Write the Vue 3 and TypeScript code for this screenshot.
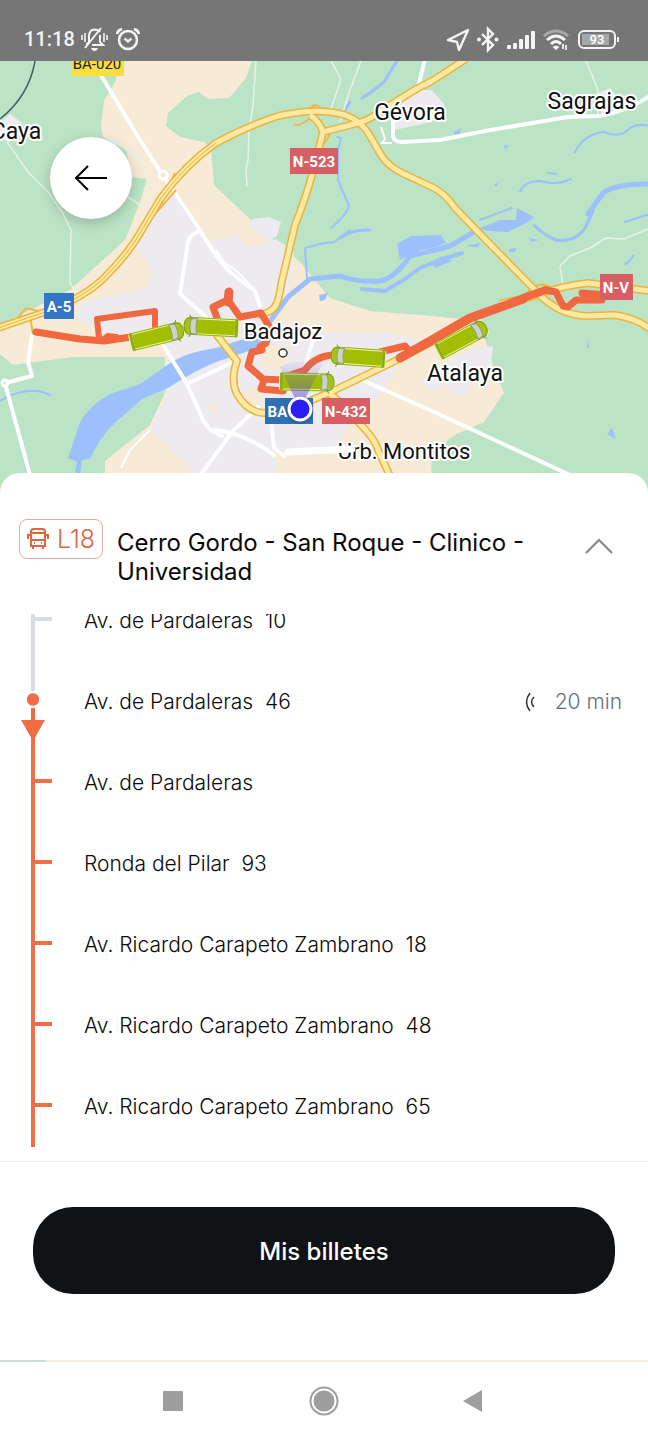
<script setup lang="ts">
interface Stop {
  name: string
  kind: 'passed' | 'current' | 'next'
  wait?: string
}

interface Vehicle {
  x: number
  y: number
  angle: number
}

const stops: Stop[] = [
  { name: 'Av. de Pardaleras  10', kind: 'passed' },
  { name: 'Av. de Pardaleras  46', kind: 'current', wait: '20 min' },
  { name: 'Av. de Pardaleras', kind: 'next' },
  { name: 'Ronda del Pilar  93', kind: 'next' },
  { name: 'Av. Ricardo Carapeto Zambrano  18', kind: 'next' },
  { name: 'Av. Ricardo Carapeto Zambrano  48', kind: 'next' },
  { name: 'Av. Ricardo Carapeto Zambrano  65', kind: 'next' },
]

const vehicles: Vehicle[] = [
  { x: 157, y: 336, angle: -14 },
  { x: 211, y: 327, angle: 183 },
  { x: 358, y: 357, angle: 184 },
  { x: 307, y: 382, angle: 1 },
  { x: 462, y: 339, angle: -28 },
]

const motorways: string[] = [
  'M310 115 Q320 122 323 132 L314 168 Q306 198 295 225 L281 285 Q279 302 274 308 Q268 314 258 315',
  'M323 132 L358 123 Q372 119 382 110 L418 88 L432 81 L466 59',
  'M216 334 L237 361 Q230 380 237 394 Q247 412 264 413 L285 412 L335 390 L395 361 L470 322',
  'M328 392 Q350 410 358 422 Q376 440 378 450 L390 476',
  'M500 304 L534 296 Q560 286 588 283 Q620 287 650 291',
  'M-2 328 L48 311 Q85 297 105 277 Q130 252 143 228 L161 198 Q185 165 216 143 Q245 127 278 116 Q318 107 345 115 Q362 121 370 136 L381 155 Q388 166 402 173 L432 187 Q445 193 455 208 L486 240 L535 290 Q556 314 585 316 L615 315 Q636 318 650 329',
]

const whiteRoads: string[] = [
  'M102 77 L140 140 L163 176 L173 190 L200 230 Q216 258 230 272 L255 291 L260 306',
  'M201 231 Q190 234 188 242 L180 294 L206 317',
  'M32 335 L28 362 L32 376 L5 383 L30 475',
  'M162 343 L187 384 L200 413 Q205 428 216 433 L222 436',
  'M425 59 L418 88',
  'M393 120 V136 Q394 142 402 142 L440 140 L485 131 L568 117 L600 116 Q625 112 650 96',
  'M360 379 L432 411 L568 474',
  'M187 384 L235 361',
  'M270 413 L274 448 L284 456 M216 430 Q246 434 274 455',
  'M202 473 L232 432 L258 407',
  'M313 340 L304 370',
]
</script>

<template>
  <div class="screen">
    <header class="status">
      <div class="status-group">
        <span class="clock">11:18</span>
        <svg width="28" height="28" viewBox="0 0 28 28" class="line" aria-label="Silencio">
          <path d="M6 20 V19 L8 17 V12 Q8 5 13 4.500 Q17 4.500 19 7 M19 10 V17 L22 20 H11" />
          <path d="M4 23 L20 3" />
          <path d="M1 10 V15 M4 8 V17 M23 8 V17 M26 10 V15" stroke-width="1.600" />
          <path d="M10 23 H17 Q16 26 13.500 26 Q11 26 10 23" class="fill" stroke="none" />
        </svg>
        <svg width="28" height="28" viewBox="0 0 28 28" class="line" aria-label="Alarma">
          <circle cx="13" cy="15" r="9" stroke-width="2.600" />
          <path d="M9.500 13.500 L13 16.500 L16.500 13.500" stroke-width="2.400" />
          <path d="M2 9 Q3 5 7 4 M19 4 Q23 5 24 9" stroke-width="2.600" />
        </svg>
      </div>
      <div class="status-group">
        <svg width="24" height="28" viewBox="0 0 24 28" class="line" aria-label="Ubicación">
          <path d="M2 15 L22 5 L13 25 L11 17 Z" stroke-linejoin="round" stroke-width="2.400" />
        </svg>
        <svg width="24" height="28" viewBox="0 0 24 28" class="line" aria-label="Bluetooth">
          <path d="M6 9 L17 20 L12 25 V4 L17 9 L6 20" stroke-width="2.400" />
          <circle cx="3" cy="14.500" r="2" class="fill" stroke="none" />
          <circle cx="20.500" cy="14.500" r="2" class="fill" stroke="none" />
        </svg>
        <svg width="30" height="28" viewBox="0 0 30 28" class="fill" aria-label="Cobertura">
          <rect x="1" y="20" width="4" height="4" rx="1" />
          <rect x="7" y="18" width="4" height="6" rx="1" />
          <rect x="13" y="14" width="4" height="10" rx="1" />
          <rect x="19" y="10" width="4" height="14" rx="1" />
          <rect x="25" y="6" width="4" height="18" rx="1" />
        </svg>
        <svg width="28" height="28" viewBox="0 0 28 28" class="line" aria-label="Wifi">
          <path d="M2 11 Q14 1 26 11" stroke-width="3" opacity="0.400" />
          <path d="M5 15 Q14 7 23 15 M9 19 Q14 14 19 19" stroke-width="3" />
          <path d="M10.500 22 Q14 19 17.500 22 L14 25 Z" class="fill" stroke="none" />
          <path d="M21 24 V19 M24 20 V25" stroke-width="1.800" />
        </svg>
        <svg width="44" height="28" viewBox="0 0 44 28" class="line" aria-label="Batería">
          <rect x="3" y="6" width="36" height="17" rx="5" />
          <rect x="6" y="9" width="27" height="11" fill="#a7a7a7" stroke="none" />
          <path d="M42 12 V17" />
          <text x="21" y="19" class="battery">93</text>
        </svg>
      </div>
    </header>

    <main class="map">
      <svg class="map-art" viewBox="0 61 648 440" preserveAspectRatio="xMidYMin slice" aria-label="Mapa de Badajoz">
        <defs>
          <g id="bus">
            <rect x="-28" y="-9" width="55" height="18" rx="3" fill="#eef2a0" />
            <rect x="-27" y="-9" width="3" height="18" rx="1" fill="#8cab1e" />
            <rect x="-24" y="-7" width="40" height="14" fill="#a2be02" />
            <path d="M-25 -8.500 H22 M-25 8.500 H22" stroke="#92b016" stroke-width="1" />
            <path d="M19 -8 H23 Q27 -6 27 0 Q27 6 23 8 H19 Z" fill="#a5c516" stroke="#7d9420" stroke-width="1" />
            <path d="M14 -8 L20 -7 Q22 0 20 7 L14 8 Q16 0 14 -8" fill="#ccd2c6" stroke="#909f7c" stroke-width="1" />
            <path d="M20 -8 L22 -11 M20 8 L22 11" stroke="#7f8b6f" stroke-width="1" />
          </g>
          <linearGradient id="cone" x1="0" y1="1" x2="0" y2="0">
            <stop offset="0" stop-color="#453cc7" stop-opacity="0.650" />
            <stop offset="1" stop-color="#7569ca" stop-opacity="0.060" />
          </linearGradient>
        </defs>

        <rect x="0" y="61" width="648" height="440" fill="#bbe4c6" />

        <g fill="#f7ead6">
          <path d="M118 61 H252 L246 78 L229 98 L208 99 L199 92 L187 96 L168 113 L166 126 L180 137 L204 142 L211 148 L214 185 L252 221 L300 262 L330 298 L370 311 L432 316 L462 319 L483 332 L493 365 L504 393 L484 422 L455 435 L432 452 L430 501 H105 L105 461 L150 425 L166 390 L160 357 H75 L13 365 L0 354 V325 L70 290 L125 240 L140 202 L147 179 L131 177 L126 150 L103 137 L101 126 L104 101 L116 80 Z" />
        </g>

        <g fill="#eeebf0">
          <path d="M172 188 L208 242 L225 238 L238 235 L243 245 L258 246 L276 239 L294 252 L291 285 L274 305 L255 335 L255 356 H165 L167 333 L105 333 L75 317 L82 302 L150 288 L151 270 L145 257 L135 246 L160 205 Z" />
          <path d="M252 219 L269 217 L281 222 L277 236 L268 241 L252 228 Z" />
          <path d="M165 357 L245 340 L300 333 L390 333 L420 340 L395 372 L374 401 L350 420 L335 450 H275 L280 473 H194 L150 428 L156 414 L166 400 Z" />
          <path d="M435 368 L470 350 L493 346 L490 370 L470 384 L466 397 L455 394 L444 385 L428 392 L420 380 Z" />
          <path d="M0 122 L10 114 L22 123 L10 142 L0 139 Z" />
          <path d="M392 113 L416 90 L432 90 L445 105 L432 122 L394 130 Z" />
          <path d="M596 94 L610 88 L622 103 L602 114 Z" />
        </g>
        <path d="M165 365 L164 395 L149 423 L105 460 L100 473 H0 V366 L13 365 L75 357 H165 Z" fill="#bbe4c6" />
        <g fill="#f7ead6">
          <path d="M150 430 L190 466 L195 476 H105 V461 L121 455 Z" />
          <path d="M244 394 L253 385 L262 388 L258 404 L249 410 Z" />
          <path d="M267 345 L290 347 L286 365 L272 372 L260 365 Z" />
          <path d="M216 402 L208 405 L210 414 L218 412 Z" />
          <path d="M280 452 H340 V480 H275 Z" />
        </g>

        <g fill="#9dbffb">
          <path d="M68 458 L79 425 Q86 408 110 394 L140 384 L166 366 Q185 352 216 348 L247 338 L255 329 L271 328 L268 343 L246 352 L216 362 Q196 370 168 388 L142 399 L116 422 Q100 436 90 459 L82 460 L80 475 H74 L77 462 Z" />
          <path d="M397 244 L411 236 L441 235 L446 243 L432 248 L420 250 L400 260 Z" />
          <path d="M478 229 L500 220 L516 220 L517 208 L534 217 L528 222 L508 232 L490 231 Z" />
          <path d="M431 262 L442 256 L452 261 L435 268 Z M466 246 L480 243 L478 247 Z M509 249 L516 248 L515 252 L509 252 Z M529 238 L539 240 L531 242 Z" />
          <path d="M319 295 L328 293 L325 300 L320 301 Z M454 132 L461 128 L460 135 L455 136 Z M503 146 L509 145 L506 149 Z M494 184 L498 183 L496 187 Z M586 347 L589 342 V348 Z M607 434 L612 428 L616 439 Z" />
        </g>
        <g fill="none" stroke="#9dbffb" stroke-linecap="round" stroke-linejoin="round">
          <path d="M268 324 L288 297 L310 279 L340 276 Q355 282 380 281 Q395 278 410 256 Q436 250 450 246 L474 232" stroke-width="5" />
          <path d="M362 289 L385 291 L405 279 L420 268 L440 260 L462 253" stroke-width="4" />
          <path d="M307 278 L305 248 L320 244 L334 242 L350 230 M331 228 Q346 216 349 206 L338 180 V150 L341 138 L337 137" stroke-width="2" />
          <path d="M340 238 Q352 229 370 230" stroke-width="3" />
          <path d="M397 61 L384 82 Q372 92 362 98 M350 102 L345 110" stroke-width="3" />
          <path d="M534 225 Q542 234 556 240 Q575 243 585 228 L593 211" stroke-width="3" />
          <path d="M588 214 Q598 200 604 192 Q620 183 650 184" stroke-width="5" />
          <path d="M575 152 Q584 134 604 132 Q620 139 630 128 Q638 123 650 126" stroke-width="2" />
          <path d="M520 192 Q524 181 540 181 Q556 186 571 179 M548 173 L556 174 M625 222 L650 214 M480 220 L512 208 M0 401 Q28 384 50 395 M625 264 Q630 262 633 256" stroke-width="2" />
        </g>

        <g fill="none" stroke="#e4f5e5" stroke-width="1.500">
          <path d="M256 61 L253 105 L249 130 L248 160 L246 170 L247 187" />
          <path d="M331 61 L341 79 L330 112 M361 61 L350 90 L340 122 M586 61 L598 90 L598 116" />
          <path d="M7 142 L28 172 L48 192 L62 212 L71 230 L70 282 L80 304 M128 197 L145 208 L153 190 L140 160 L120 145 L110 140" />
          <path d="M650 228 L624 239 L606 238 L590 248 L570 256 L560 266 L563 286 M573 300 L571 315" />
        </g>
        <path d="M35 61 Q29 96 0 119" fill="none" stroke="#48605c" stroke-width="1.500" />

        <g fill="none" stroke="#fff" stroke-width="4" stroke-linecap="round" stroke-linejoin="round">
          <path v-for="road in whiteRoads" :key="road" :d="road" />
          <path d="M216 250 L224 262 Q246 275 259 300" stroke-width="2" />
        </g>
        <path d="M381 127 L385 139 L382 143 L392 143 M121 468 L130 450 L150 430" fill="none" stroke="#fff" stroke-width="2" />
        <circle cx="163" cy="175" r="4" fill="#f7ead6" stroke="#fff" stroke-width="3" />
        <circle cx="5" cy="383" r="3" fill="#d8eadb" stroke="#fff" stroke-width="3" />

        <g fill="none" stroke="#efb947" stroke-width="2">
          <path d="M16 320 L26 308 L38 311 M30 316 L33 334 M148 222 L176 190 M161 204 L175 173 M294 124 Q298 128 310 118 M308 113 Q314 99 322 110" />
          <path d="M528 292 Q540 279 554 289 M318 140 Q325 149 330 133" />
        </g>
        <g fill="none" stroke-linejoin="round">
          <path v-for="road in motorways" :key="road" :d="road" stroke="#e9b43f" stroke-width="8" />
          <path v-for="road in motorways" :key="road" :d="road" stroke="#fde9a2" stroke-width="5" />
        </g>
        <path d="M-2 328 L48 311 Q85 297 105 277 Q130 252 143 228 L161 198 Q185 165 216 143" fill="none" stroke="#e9b43f" stroke-width="1" />

        <g fill="none" stroke="#f0683f" stroke-linecap="round" stroke-linejoin="round" stroke-width="6">
          <path d="M36 332 L80 339 L104 341 L131 337" stroke-width="7" />
          <path d="M99 338 L97 319 L155 311 V336" />
          <path d="M104 339 L108 336 L116 337" />
          <path d="M217 318 L213 307 L228 300 L240 317 L261 313 L270 328 L266 343 L260 347 L262 350 L252 352 L248 366 L263 379 L300 381 M264 380 L261 389 L283 391" stroke-width="7" />
          <path d="M228 302 L229 292" stroke-width="9" />
          <path d="M282 378 L305 370 Q314 357 332 355 M380 352 L405 346 L410 352" stroke-width="7" />
          <path d="M400 358 L432 340 L470 318 L523 299" stroke-width="9" />
          <path d="M523 298 L546 290" stroke-width="8" />
          <path d="M545 290 L556 292 L563 306 L568 307 L576 300 H602 M582 293 L606 295" stroke-width="7" />
        </g>

        <use v-for="bus in vehicles" :key="`${bus.x}-${bus.y}`" href="#bus" :transform="`translate(${bus.x} ${bus.y}) rotate(${bus.angle})`" />

        <g class="shield">
          <rect x="71" y="50" width="53" height="26" fill="#fade3d" />
          <text x="97" y="69" class="dark">BA-020</text>
          <rect x="290" y="148" width="48" height="26" fill="#d75f63" />
          <text x="314" y="167">N-523</text>
          <rect x="44" y="293" width="30" height="26" fill="#3475c5" />
          <text x="59" y="312">A-5</text>
          <rect x="600" y="274" width="33" height="26" fill="#d75f63" />
          <text x="616" y="293">N-V</text>
          <rect x="265" y="398" width="48" height="26" fill="#2f6fb4" />
          <text x="289" y="417">BA-20</text>
          <rect x="322" y="398" width="48" height="26" fill="#d75f63" />
          <text x="346" y="417">N-432</text>
        </g>

        <g class="place">
          <text x="592" y="109">Sagrajas</text>
          <text x="410" y="120">Gévora</text>
          <text x="16" y="139">Caya</text>
          <text x="283" y="339" class="city">Badajoz</text>
          <text x="465" y="381">Atalaya</text>
          <text x="404" y="459" class="city">Urb. Montitos</text>
        </g>
        <circle cx="283" cy="353" r="4" fill="#fff" stroke="#333" stroke-width="1.500" />
        <path d="M288 452 L352 449" stroke="#fff" stroke-width="7" stroke-linecap="round" />

        <path d="M300 409 L280 367 Q301 357 323 363 Z" fill="url(#cone)" />
        <circle cx="300" cy="410" r="14" fill="#333" opacity="0.200" />
        <circle cx="300" cy="409" r="11" fill="#2a1df7" stroke="#fff" stroke-width="3" />
      </svg>
      <button class="back" type="button" aria-label="Volver">
        <svg width="34" height="28" viewBox="0 0 34 28">
          <path d="M33 14 H2 M14 2 L2 14 L14 26" />
        </svg>
      </button>
    </main>

    <section class="sheet">
      <div class="route">
        <div class="badge">
          <svg width="22" height="24" viewBox="0 0 22 24" aria-hidden="true">
            <path d="M4 19 V5 Q4 2 7 2 H15 Q18 2 18 5 V19 Z M4 6 H18 M4 13 H18 M6 19 V22 M16 19 V22 M1 7 V12 M21 7 V12 M1 8 H4 M18 8 H21" />
            <path d="M7 16 H8 M14 16 H15" />
          </svg>
          <span>L18</span>
        </div>
        <h1>Cerro Gordo - San Roque - Clinico - Universidad</h1>
        <button class="collapse" type="button" aria-label="Contraer">
          <svg width="28" height="18" viewBox="0 0 28 18"><path d="M1 16 L14 3 L27 16" /></svg>
        </button>
      </div>

      <div class="stops">
        <ol>
          <li v-for="stop in stops" :key="stop.name" class="stop">
            <svg class="rail" width="32" height="81" viewBox="0 0 32 81" aria-hidden="true">
              <g v-if="stop.kind === 'passed'" fill="#d8dbdf">
                <rect x="11" y="0" width="4" height="81" />
                <rect x="15" y="37" width="17" height="4" />
              </g>
              <g v-else-if="stop.kind === 'current'" fill="#f06c42">
                <rect x="11" y="0" width="4" height="30" fill="#d8dbdf" />
                <circle cx="13" cy="38.500" r="6.200" />
                <rect x="11" y="47" width="4" height="34" />
                <path d="M1 59 H25 L13 80 Z" />
              </g>
              <g v-else fill="#ee6f47">
                <rect x="11" y="0" width="4" height="81" />
                <rect x="15" y="37" width="17" height="4" />
              </g>
            </svg>
            <span class="name">{{ stop.name }}</span>
            <span v-if="stop.wait" class="wait">
              <svg width="10" height="20" viewBox="0 0 10 20" aria-hidden="true">
                <path d="M5 1 Q-2 10 5 19 M9 5 Q4 10 9 15" />
              </svg>
              {{ stop.wait }}
            </span>
          </li>
        </ol>
      </div>

      <footer class="actions">
        <button class="tickets" type="button">Mis billetes</button>
      </footer>
    </section>

    <div class="map-edge"></div>
    <nav class="system">
      <button type="button" aria-label="Recientes">
        <svg width="30" height="30" viewBox="0 0 30 30"><rect x="4" y="5" width="20" height="20" rx="1" /></svg>
      </button>
      <button type="button" aria-label="Inicio">
        <svg width="30" height="30" viewBox="0 0 30 30">
          <circle cx="15" cy="15" r="13.500" fill="none" stroke="#9e9e9e" stroke-width="2" />
          <circle cx="15" cy="15" r="10.500" />
        </svg>
      </button>
      <button type="button" aria-label="Atrás">
        <svg width="30" height="30" viewBox="0 0 30 30"><path d="M4 15 L23 4 V26 Z" /></svg>
      </button>
    </nav>
  </div>
</template>

<style>
body {
  margin: 0;
  background: #fff;
}
</style>

<style scoped>
.screen {
  display: flex;
  flex-direction: column;
  min-height: 100vh;
  overflow: hidden;
  background: #fff;
  color: #0a0a0a;
  font-family: Inter, "Liberation Sans", sans-serif;
}
button {
  padding: 0;
  border: 0;
  background: none;
  font: inherit;
}
svg {
  display: block;
}
.status {
  display: flex;
  justify-content: space-between;
  padding: 25px 28px 8px 24px;
  background: #767676;
  color: #f4f4f4;
  font-family: Roboto, sans-serif;
}
.status-group {
  display: flex;
  align-items: center;
  gap: 6px;
}
.clock {
  font-size: 20px;
  line-height: 28px;
  font-weight: 500;
}
.line {
  fill: none;
  stroke: #f4f4f4;
  stroke-width: 2;
}
.fill {
  fill: #f4f4f4;
}
.battery {
  fill: #fff;
  stroke: none;
  font-size: 13px;
  font-weight: 500;
  text-anchor: middle;
}
.map {
  position: relative;
}
.map-art {
  width: 100%;
  height: 440px;
}
.shield text {
  fill: #fff;
  font: 700 15px Roboto, sans-serif;
  text-anchor: middle;
}
.shield .dark {
  fill: #222;
  font-weight: 400;
}
.place text {
  fill: #111;
  stroke: #fff;
  stroke-width: 4px;
  stroke-linejoin: round;
  paint-order: stroke;
  font: 400 23px Roboto, sans-serif;
  text-anchor: middle;
}
.place .city {
  font-size: 22px;
}
.back {
  position: absolute;
  top: 76px;
  left: 50px;
  display: grid;
  place-items: center;
  width: 82px;
  height: 82px;
  border-radius: 50%;
  background: #fff;
  box-shadow: 0 4px 14px rgb(0 0 0 / 20%);
}
.back path {
  fill: none;
  stroke: #000;
  stroke-width: 2;
}
.sheet {
  position: relative;
  flex: 1;
  margin-top: -28px;
  border-radius: 20px 20px 0 0;
  background: #fff;
}
.route {
  display: flex;
  align-items: flex-start;
  gap: 14px;
  padding: 46px 35px 28px 19px;
}
.badge {
  display: flex;
  align-items: center;
  justify-content: center;
  gap: 8px;
  box-sizing: border-box;
  width: 84px;
  height: 40px;
  border: 1px solid #dcae9b;
  border-radius: 8px;
  color: #dd6643;
  font-size: 25px;
  font-weight: 300;
}
.badge path {
  fill: none;
  stroke: #dd6643;
  stroke-width: 2;
}
h1 {
  flex: 1;
  margin: 9px 0 0;
  font-size: 24px;
  line-height: 29px;
  font-weight: 400;
}
.collapse {
  margin-top: 18px;
}
.collapse path {
  fill: none;
  stroke: #85858a;
  stroke-width: 2;
}
.stops {
  overflow: hidden;
}
.stops ol {
  margin: -34px 0 0;
  padding: 0 26px 0 20px;
  list-style: none;
}
.stop {
  display: flex;
  align-items: center;
  font-size: 21px;
  font-weight: 300;
}
.name {
  flex: 1;
  margin-left: 32px;
  white-space: pre;
}
.wait {
  display: flex;
  align-items: center;
  gap: 20px;
  color: #66707a;
}
.wait path {
  fill: none;
  stroke: #333;
  stroke-width: 1.500;
}
.actions {
  margin-top: 14px;
  padding: 45px 33px 66px;
  border-top: 1px solid #ececec;
}
.tickets {
  width: 100%;
  height: 87px;
  padding-top: 2px;
  border-radius: 40px;
  background: #0f1316;
  color: #fff;
  font-size: 24px;
  font-weight: 500;
}
.map-edge {
  height: 2px;
  background: linear-gradient(to right, #c8dedb 46px, #f2ede5 46px);
}
.system {
  display: flex;
  justify-content: center;
  gap: 120px;
  padding: 24px 0;
}
.system svg {
  fill: #9e9e9e;
}
</style>
